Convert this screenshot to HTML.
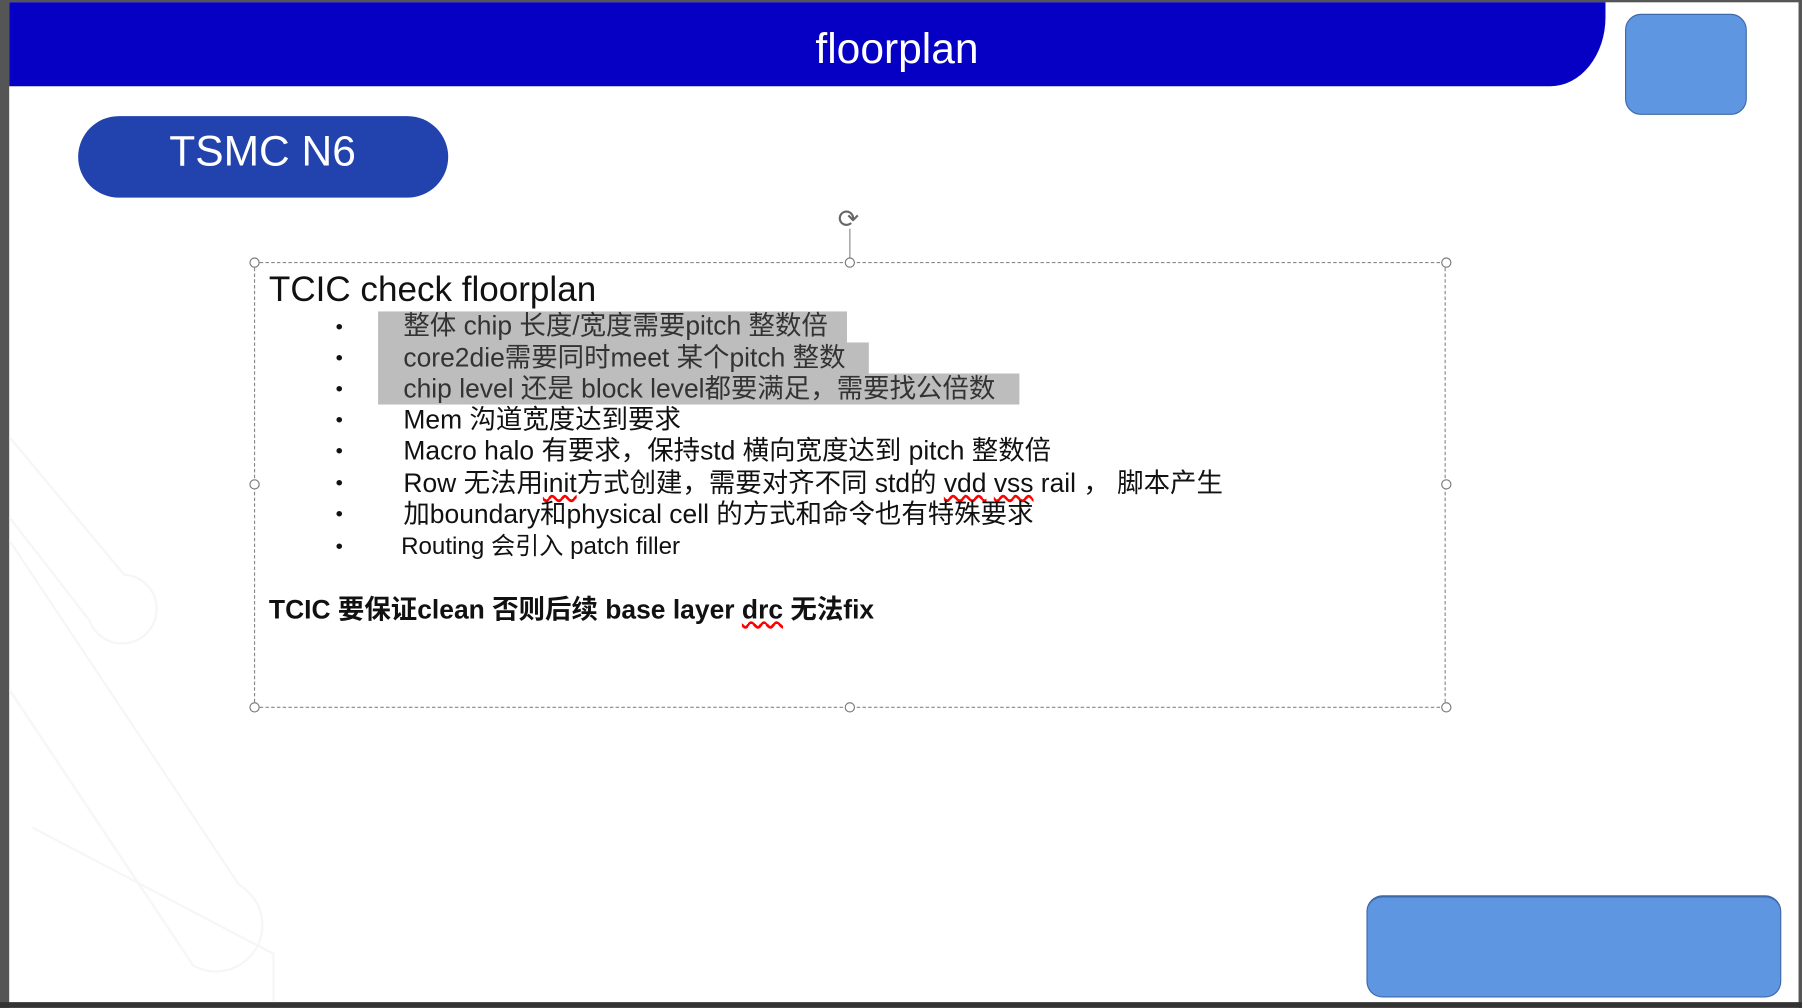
<!DOCTYPE html>
<html><head><meta charset="utf-8"><style>
html,body{margin:0;padding:0;width:1802px;height:1008px;overflow:hidden;background:#3a3a3a}
#s{position:absolute;left:0;top:0;width:1568px;height:877px;transform:scale(1.14923);transform-origin:0 0;background:#fff;font-family:"Liberation Sans","Noto Sans CJK SC",sans-serif}
.a{position:absolute}
.l{position:absolute;left:351px;font-size:23px;line-height:26px;color:#111;white-space:nowrap}
.b{position:absolute;left:292px;font-size:18px;line-height:26px;color:#111}
.h{position:absolute;width:9px;height:9px;border:1.5px solid #777;border-radius:50%;background:#fff;box-sizing:border-box}
</style></head><body><div id="s">
<div class="a" style="left:0;top:0;width:8px;height:877px;background:#555"></div>
<div class="a" style="left:0;top:0;width:1568px;height:2px;background:#555"></div>
<div class="a" style="left:1565px;top:0;width:3px;height:877px;background:#555"></div>
<div class="a" style="left:0;top:872px;width:1568px;height:5px;background:#333"></div>
<svg class="a" style="left:8px;top:300px" width="260" height="572"><g fill="none" stroke="#f6f6f6" stroke-width="2"><path d="M0 80 L100 200 A30 30 0 1 1 70 240 L0 150"/><path d="M0 170 L200 470 A40 40 0 0 1 160 540 L0 300"/><path d="M20 420 L230 530 L230 572"/></g></svg>
<div class="a" style="left:8px;top:2px;width:1389px;height:73px;background:#0600c4;border-bottom-right-radius:48px 60px"></div>
<div class="a" style="left:8px;top:21px;width:1545px;text-align:center;color:#fff;font-size:37px;line-height:44px">floorplan</div>
<div class="a" style="left:1414px;top:12px;width:106px;height:88px;background:#5f96e2;border:1px solid #3e6aa8;border-radius:14px;box-sizing:border-box"></div>
<div class="a" style="left:68px;top:101px;width:322px;height:71px;background:#2243ad;border-radius:36px;color:#fff;font-size:37px;line-height:62px;text-align:center;box-sizing:border-box;padding-right:1px">TSMC N6</div>
<div class="a" style="left:1189px;top:779px;width:361px;height:89px;background:#5f96e2;border:1px solid #3e6aa8;border-top-width:2px;border-radius:14px;box-sizing:border-box"></div>
<div class="a" style="left:221px;top:228px;width:1037px;height:388px;border:1px dashed #888;box-sizing:border-box"></div>
<div class="a" style="left:739px;top:199px;width:1px;height:29px;background:#888"></div>
<div class="a" style="left:729px;top:178px;font-size:22px;color:#666">⟳</div>
<div class="h" style="left:217px;top:224px"></div><div class="h" style="left:735px;top:224px"></div><div class="h" style="left:1254px;top:224px"></div>
<div class="h" style="left:217px;top:417px"></div><div class="h" style="left:1254px;top:417px"></div>
<div class="h" style="left:217px;top:611px"></div><div class="h" style="left:735px;top:611px"></div><div class="h" style="left:1254px;top:611px"></div>
<div class="a" style="left:234px;top:234px;font-size:30.5px;line-height:36px;color:#111">TCIC check floorplan</div>
<div class="a" style="left:329px;top:271px;width:408px;height:28px;background:#bdbdbd"></div>
<div class="a" style="left:329px;top:298px;width:427px;height:28px;background:#bdbdbd"></div>
<div class="a" style="left:329px;top:325px;width:558px;height:27px;background:#bdbdbd"></div>
<div class="b" style="top:271px">•</div><div class="b" style="top:298px">•</div><div class="b" style="top:325px">•</div><div class="b" style="top:352px">•</div><div class="b" style="top:379px">•</div><div class="b" style="top:407px">•</div><div class="b" style="top:434px">•</div><div class="b" style="top:462px">•</div>
<div class="l" style="top:270px;color:#333">整体 chip 长度/宽度需要pitch 整数倍</div>
<div class="l" style="top:298px;color:#333">core2die需要同时meet 某个pitch 整数</div>
<div class="l" style="top:325px;color:#333">chip level 还是 block level都要满足，需要找公倍数</div>
<div class="l" style="top:352px">Mem 沟道宽度达到要求</div>
<div class="l" style="top:379px">Macro halo 有要求，保持std 横向宽度达到 pitch 整数倍</div>
<div class="l" style="top:407px">Row 无法用<u style="text-decoration:underline wavy red">init</u>方式创建，需要对齐不同 std的 <u style="text-decoration:underline wavy red">vdd</u> <u style="text-decoration:underline wavy red">vss</u> rail ， 脚本产生</div>
<div class="l" style="top:434px">加boundary和physical cell 的方式和命令也有特殊要求</div>
<div class="l" style="top:463px;font-size:21px;left:349px">Routing 会引入 patch filler</div>
<div class="a" style="left:234px;top:517px;font-size:23px;font-weight:bold;line-height:26px;color:#111;white-space:nowrap">TCIC 要保证clean 否则后续 base layer <u style="text-decoration:underline wavy red">drc</u> 无法fix</div>
</div></body></html>
